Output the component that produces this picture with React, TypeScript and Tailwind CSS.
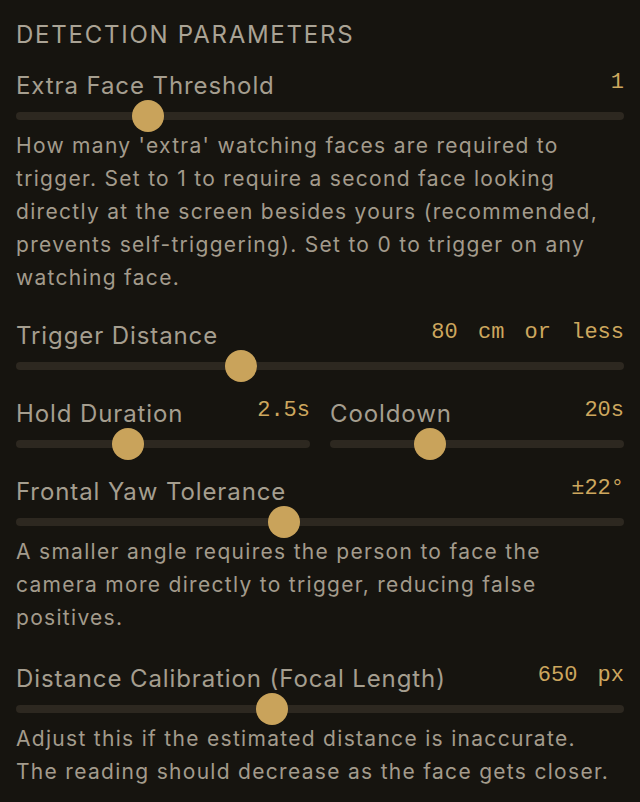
import React from "react";

const sans = { fontFamily: "Inter, 'Noto Sans', sans-serif" };

function Track({ p }: { p: number }) {
  return (
    <div className="relative h-[26px]">
      <div className="absolute left-0 right-0 top-1/2 h-2 -translate-y-1/2 rounded-full bg-[#2d2820]" />
      <div
        className="absolute top-1/2 h-8 w-8 -translate-y-1/2 rounded-full bg-[#c9a35b]"
        style={{ left: `calc(${p} * (100% - 32px))` }}
      />
    </div>
  );
}

function Field({
  label,
  value,
  p,
}: {
  label: string;
  value: string;
  p: number;
}) {
  return (
    <div>
      <div className="flex h-[34px] items-center justify-between">
        <span className="whitespace-nowrap text-[24px] tracking-[0.9px] text-[#a59e8f]">{label}</span>
        <span
          className="whitespace-nowrap pb-[8px] text-[22px] text-[#cda75e] [word-spacing:7px]"
          style={{ fontFamily: "'Liberation Mono', monospace" }}
        >
          {value}
        </span>
      </div>
      <Track p={p} />
    </div>
  );
}

function Desc({ children }: { children: React.ReactNode }) {
  return (
    <p className="whitespace-nowrap text-[21px] leading-[33px] tracking-[1.3px] text-[#a39b8c]">
      {children}
    </p>
  );
}

export default function App() {
  return (
    <div className="min-h-[802px] bg-[#16140f] px-4 pt-[22px]" style={sans}>
      <h2 className="text-[24px] leading-[26px] tracking-[1.75px] text-[#aaa395]">
        DETECTION PARAMETERS
      </h2>

      <div className="mt-[21px]">
        <Field label="Extra Face Threshold" value="1" p={0.2014} />
        <Desc>
          How many 'extra' watching faces are required to
          <br />
          trigger. Set to 1 to require a second face looking
          <br />
          directly at the screen besides yours (recommended,
          <br />
          prevents self-triggering). Set to 0 to trigger on any
          <br />
          watching face.
        </Desc>
      </div>

      <div className="mt-[25px]">
        <Field label="Trigger Distance" value="80 cm or less" p={0.363} />
      </div>

      <div className="mt-[18px] grid grid-cols-2 gap-5">
        <Field label="Hold Duration" value="2.5s" p={0.366} />
        <Field label="Cooldown" value="20s" p={0.32} />
      </div>

      <div className="mt-[18px]">
        <Field label="Frontal Yaw Tolerance" value="±22°" p={0.4375} />
        <Desc>
          A smaller angle requires the person to face the
          <br />
          camera more directly to trigger, reducing false
          <br />
          positives.
        </Desc>
      </div>

      <div className="mt-[28px]">
        <Field label="Distance Calibration (Focal Length)" value="650 px" p={0.4167} />
        <Desc>
          Adjust this if the estimated distance is inaccurate.
          <br />
          The reading should decrease as the face gets closer.
        </Desc>
      </div>
    </div>
  );
}
